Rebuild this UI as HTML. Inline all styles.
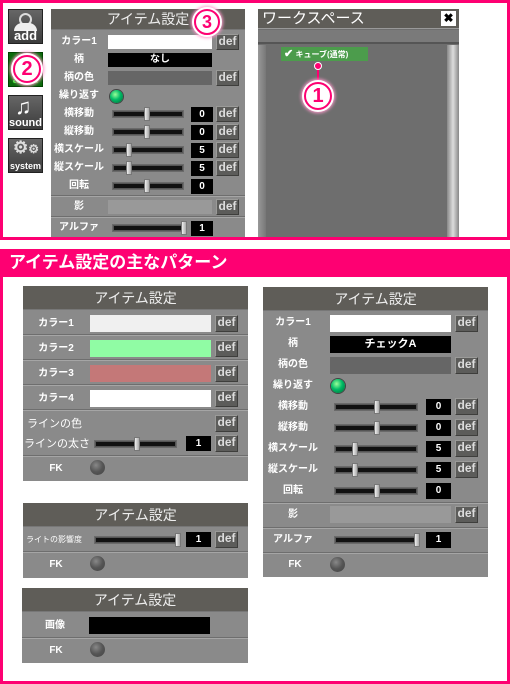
<!DOCTYPE html><html><head><meta charset="utf-8"><style>
*{margin:0;padding:0;box-sizing:border-box}
body{width:510px;height:684px;background:#fff;position:relative;overflow:hidden;font-family:"Liberation Sans","Noto Sans CJK JP",sans-serif}
div,span{position:absolute}
.pk{background:#fe0072}
.p{background:#8a8a8a;border-top:1px solid #a0a0a0}
.h{background:#5f5d58;color:#eee;font-size:14px;text-align:center;line-height:22px;border-bottom:1px solid #777}
.l{color:#fff;font-size:10px;font-weight:bold;text-align:center;line-height:14px;white-space:nowrap}
.d{width:23px;height:16px;background:#5c5c5a;border:1px solid #3e3e3c;border-top-color:#9a9a98;border-left-color:#9a9a98;color:#ddd;font-size:12px;font-weight:bold;text-align:center;line-height:13px}
.d::after{content:"def"}
.n{background:#000;color:#fff;font-size:10px;font-weight:bold;text-align:center;line-height:15px;height:15px;width:22px}
.s{height:6px;background:#111;border:1px solid #555;box-shadow:0 0 0 1px #6a6a6a}
.t{width:6px;height:14px;background:linear-gradient(90deg,#eee,#aaa);border:1px solid #777;top:-5px}
.g{width:13px;height:13px;border-radius:50%;background:radial-gradient(circle at 40% 35%,#9f9,#0b6 45%,#063);box-shadow:0 0 0 1px #444}
.k{width:15px;height:15px;border-radius:50%;background:radial-gradient(circle at 40% 35%,#888,#555 50%,#444)}
.sep{height:2px;background:#6e6e6e;border-bottom:1px solid #a5a5a5}
.ic{width:35px;height:35px;background:linear-gradient(#666,#3c3c3c);border:1px solid #222;color:#fff;font-weight:bold;text-align:center}
.c{border-radius:50%;background:#fff;border:2px solid #fe0072;box-shadow:0 0 0 2px #fff,0 0 3px 3px #f9c;color:#fe0072;font-weight:bold;text-align:center}
</style></head><body>
<div class="pk" style="left:0;top:0;width:510px;height:3px"></div>
<div class="pk" style="left:0;top:0;width:3px;height:240px"></div>
<div class="pk" style="left:507px;top:0;width:3px;height:240px"></div>
<div class="pk" style="left:0;top:237px;width:510px;height:3px"></div>

<div class="ic" style="left:8px;top:9px;font-size:13px"><span style="left:10px;top:3px;width:13px;height:13px;border-radius:50%;border:2px solid #ddd"></span><span style="left:5px;top:13px;width:23px;height:8px;border-radius:8px 8px 0 0;background:#eee"></span><span style="left:0;width:33px;top:19px;line-height:14px">add</span></div>
<div class="ic" style="left:8px;top:52px;background:#0a6a0a;border-color:#040"><span style="left:0;width:33px;top:21px;font-size:11px;color:#3f3;line-height:12px">anim</span></div>
<div class="ic" style="left:8px;top:95px;font-size:11px"><span style="left:6px;top:0;font-size:22px;line-height:22px">♫</span><span style="left:0;width:33px;top:21px;line-height:12px">sound</span></div>
<div class="ic" style="left:8px;top:138px;font-size:9px"><span style="left:4px;top:-1px;font-size:17px;line-height:20px;color:#ddd">⚙<small style="font-size:12px">⚙</small></span><span style="left:0;width:33px;top:22px;line-height:11px">system</span></div>

<div class="p" style="left:51px;top:9px;width:194px;height:228px"></div>
<div class="h" style="left:51px;top:9px;width:194px;height:21px;line-height:21px">アイテム設定</div>
<div class="l" style="left:54px;top:35px;width:50px">カラー1</div>
<div style="left:108px;top:35px;width:104px;height:14px;background:#fff"></div><div class="d" style="left:216px;top:34px"></div>
<div class="l" style="left:54px;top:53px;width:50px">柄</div>
<div style="left:108px;top:53px;width:104px;height:14px;background:#000;color:#fff;font-size:10px;font-weight:bold;text-align:center;line-height:14px">なし</div>
<div class="l" style="left:54px;top:71px;width:50px">柄の色</div>
<div style="left:108px;top:71px;width:104px;height:14px;background:#666"></div><div class="d" style="left:216px;top:70px"></div>
<div class="l" style="left:54px;top:89px;width:50px">繰り返す</div><div class="g" style="left:110px;top:90px"></div>

<div class="l" style="left:54px;top:107px;width:50px">横移動</div><div class="s" style="left:113px;top:111px;width:70px"><div class="t" style="left:30px"></div></div><div class="n" style="left:191px;top:107px">0</div><div class="d" style="left:216px;top:106px"></div>
<div class="l" style="left:54px;top:125px;width:50px">縦移動</div><div class="s" style="left:113px;top:129px;width:70px"><div class="t" style="left:30px"></div></div><div class="n" style="left:191px;top:125px">0</div><div class="d" style="left:216px;top:124px"></div>
<div class="l" style="left:54px;top:143px;width:50px">横スケール</div><div class="s" style="left:113px;top:147px;width:70px"><div class="t" style="left:12px"></div></div><div class="n" style="left:191px;top:143px">5</div><div class="d" style="left:216px;top:142px"></div>
<div class="l" style="left:54px;top:161px;width:50px">縦スケール</div><div class="s" style="left:113px;top:165px;width:70px"><div class="t" style="left:12px"></div></div><div class="n" style="left:191px;top:161px">5</div><div class="d" style="left:216px;top:160px"></div>
<div class="l" style="left:54px;top:179px;width:50px">回転</div><div class="s" style="left:113px;top:183px;width:70px"><div class="t" style="left:30px"></div></div><div class="n" style="left:191px;top:179px">0</div>
<div class="sep" style="left:51px;top:195px;width:194px"></div>
<div class="l" style="left:54px;top:200px;width:50px">影</div><div style="left:108px;top:200px;width:104px;height:14px;background:#999"></div><div class="d" style="left:216px;top:199px"></div>
<div class="sep" style="left:51px;top:216px;width:194px"></div>
<div class="l" style="left:54px;top:221px;width:50px">アルファ</div><div class="s" style="left:113px;top:225px;width:70px"><div class="t" style="left:67px"></div></div><div class="n" style="left:191px;top:221px">1</div>

<div style="left:258px;top:9px;width:201px;height:228px;background:#6e6e6e"></div>
<div style="left:258px;top:9px;width:201px;height:20px;background:#5f5d58;color:#fff;font-size:15px;line-height:20px;padding-left:4px;border-bottom:1px solid #999">ワークスペース</div>
<div style="left:441px;top:11px;width:15px;height:15px;background:#fff;color:#000;font-size:12px;font-weight:bold;text-align:center;line-height:15px">✖</div>
<div style="left:258px;top:30px;width:201px;height:14px;background:#7a7a7a;border-bottom:2px solid #555"></div>
<div style="left:258px;top:45px;width:8px;height:192px;background:linear-gradient(90deg,#999,#777)"></div>
<div style="left:447px;top:45px;width:12px;height:192px;background:linear-gradient(90deg,#888,#ddd,#888)"></div>
<div style="left:281px;top:47px;width:87px;height:14px;background:#4c9c4c;color:#fff;font-size:8px;font-weight:bold;line-height:14px;padding-left:3px"><b style="font-size:11px">✔</b> キューブ(通常)</div>
<div class="pk" style="left:317px;top:65px;width:2px;height:18px"></div>
<div class="pk" style="left:314px;top:62px;width:8px;height:8px;border-radius:50%;border:1px solid #fff"></div>
<div class="c" style="left:304px;top:82px;width:28px;height:28px;font-size:20px;line-height:24px">1</div>
<div class="c" style="left:13px;top:55px;width:28px;height:28px;font-size:20px;line-height:24px">2</div>
<div class="c" style="left:194px;top:9px;width:26px;height:26px;font-size:18px;line-height:22px">3</div>

<div class="pk" style="left:0;top:249px;width:510px;height:28px;color:#fff;font-size:17px;font-weight:bold;line-height:28px;padding-left:9px">アイテム設定の主なパターン</div>
<div class="pk" style="left:0;top:277px;width:3px;height:407px"></div>
<div class="pk" style="left:507px;top:277px;width:3px;height:407px"></div>
<div class="pk" style="left:0;top:681px;width:510px;height:3px"></div>

<div class="p" style="left:23px;top:286px;width:225px;height:195px"></div>
<div class="h" style="left:23px;top:286px;width:225px;height:24px;line-height:24px">アイテム設定</div>
<div class="l" style="left:26px;top:317px;width:60px">カラー1</div><div style="left:90px;top:315px;width:121px;height:17px;background:#f0f0f0"></div><div class="d" style="left:215px;top:315px;height:17px"></div>
<div class="sep" style="left:23px;top:334px;width:225px"></div>
<div class="l" style="left:26px;top:342px;width:60px">カラー2</div><div style="left:90px;top:340px;width:121px;height:17px;background:#90fca4"></div><div class="d" style="left:215px;top:340px;height:17px"></div>
<div class="sep" style="left:23px;top:359px;width:225px"></div>
<div class="l" style="left:26px;top:367px;width:60px">カラー3</div><div style="left:90px;top:365px;width:121px;height:17px;background:#c47878"></div><div class="d" style="left:215px;top:365px;height:17px"></div>
<div class="sep" style="left:23px;top:384px;width:225px"></div>
<div class="l" style="left:26px;top:392px;width:60px">カラー4</div><div style="left:90px;top:390px;width:121px;height:17px;background:#fff"></div><div class="d" style="left:215px;top:390px;height:17px"></div>
<div class="sep" style="left:23px;top:409px;width:225px"></div>
<div class="l" style="left:27px;top:417px;font-size:11px;font-weight:normal">ラインの色</div><div class="d" style="left:215px;top:415px;height:17px"></div>
<div class="l" style="left:24px;top:437px;font-size:11px;font-weight:normal">ラインの太さ</div><div class="s" style="left:95px;top:441px;width:81px"><div class="t" style="left:38px"></div></div><div class="n" style="left:186px;top:436px;width:25px">1</div><div class="d" style="left:215px;top:435px;height:17px"></div>
<div class="sep" style="left:23px;top:455px;width:225px"></div>
<div class="l" style="left:36px;top:462px;width:40px">FK</div><div class="k" style="left:90px;top:460px"></div>

<div class="p" style="left:23px;top:503px;width:225px;height:75px"></div>
<div class="h" style="left:23px;top:503px;width:225px;height:24px;line-height:24px">アイテム設定</div>
<div class="l" style="left:26px;top:533px;font-size:8px;font-weight:normal">ライトの影響度</div><div class="s" style="left:95px;top:537px;width:84px"><div class="t" style="left:79px"></div></div><div class="n" style="left:186px;top:532px;width:25px">1</div><div class="d" style="left:215px;top:531px;height:17px"></div>
<div class="sep" style="left:23px;top:551px;width:225px"></div>
<div class="l" style="left:36px;top:558px;width:40px">FK</div><div class="k" style="left:90px;top:556px"></div>

<div class="p" style="left:22px;top:588px;width:226px;height:75px"></div>
<div class="h" style="left:22px;top:588px;width:226px;height:24px;line-height:24px">アイテム設定</div>
<div class="l" style="left:30px;top:619px;width:50px">画像</div><div style="left:89px;top:617px;width:121px;height:17px;background:#000"></div>
<div class="sep" style="left:22px;top:637px;width:226px"></div>
<div class="l" style="left:36px;top:644px;width:40px">FK</div><div class="k" style="left:90px;top:642px"></div>

<div class="p" style="left:263px;top:287px;width:225px;height:290px"></div>
<div class="h" style="left:263px;top:287px;width:225px;height:24px;line-height:24px">アイテム設定</div>
<div class="l" style="left:268px;top:316px;width:50px">カラー1</div><div style="left:330px;top:315px;width:121px;height:17px;background:#fff"></div><div class="d" style="left:455px;top:315px;height:17px"></div>
<div class="l" style="left:268px;top:337px;width:50px">柄</div><div style="left:330px;top:336px;width:121px;height:17px;background:#000;color:#fff;font-size:11px;font-weight:bold;text-align:center;line-height:17px">チェックA</div>
<div class="l" style="left:268px;top:358px;width:50px">柄の色</div><div style="left:330px;top:357px;width:121px;height:17px;background:#666"></div><div class="d" style="left:455px;top:357px;height:17px"></div>
<div class="l" style="left:268px;top:379px;width:50px">繰り返す</div><div class="g" style="left:331px;top:379px;width:14px;height:14px"></div>
<div class="l" style="left:268px;top:400px;width:50px">横移動</div><div class="s" style="left:335px;top:404px;width:82px"><div class="t" style="left:38px"></div></div><div class="n" style="left:426px;top:399px;width:25px;height:16px">0</div><div class="d" style="left:455px;top:398px;height:17px"></div>
<div class="l" style="left:268px;top:421px;width:50px">縦移動</div><div class="s" style="left:335px;top:425px;width:82px"><div class="t" style="left:38px"></div></div><div class="n" style="left:426px;top:420px;width:25px;height:16px">0</div><div class="d" style="left:455px;top:419px;height:17px"></div>
<div class="l" style="left:268px;top:442px;width:50px">横スケール</div><div class="s" style="left:335px;top:446px;width:82px"><div class="t" style="left:16px"></div></div><div class="n" style="left:426px;top:441px;width:25px;height:16px">5</div><div class="d" style="left:455px;top:440px;height:17px"></div>
<div class="l" style="left:268px;top:463px;width:50px">縦スケール</div><div class="s" style="left:335px;top:467px;width:82px"><div class="t" style="left:16px"></div></div><div class="n" style="left:426px;top:462px;width:25px;height:16px">5</div><div class="d" style="left:455px;top:461px;height:17px"></div>
<div class="l" style="left:268px;top:484px;width:50px">回転</div><div class="s" style="left:335px;top:488px;width:82px"><div class="t" style="left:38px"></div></div><div class="n" style="left:426px;top:483px;width:25px;height:16px">0</div>
<div class="sep" style="left:263px;top:502px;width:225px"></div>
<div class="l" style="left:268px;top:508px;width:50px">影</div><div style="left:330px;top:506px;width:121px;height:17px;background:#999"></div><div class="d" style="left:455px;top:506px;height:17px"></div>
<div class="sep" style="left:263px;top:527px;width:225px"></div>
<div class="l" style="left:268px;top:533px;width:50px">アルファ</div><div class="s" style="left:335px;top:537px;width:82px"><div class="t" style="left:78px"></div></div><div class="n" style="left:426px;top:532px;width:25px;height:16px">1</div>
<div class="sep" style="left:263px;top:552px;width:225px"></div>
<div class="l" style="left:275px;top:558px;width:40px">FK</div><div class="k" style="left:330px;top:557px"></div>
</body></html>
